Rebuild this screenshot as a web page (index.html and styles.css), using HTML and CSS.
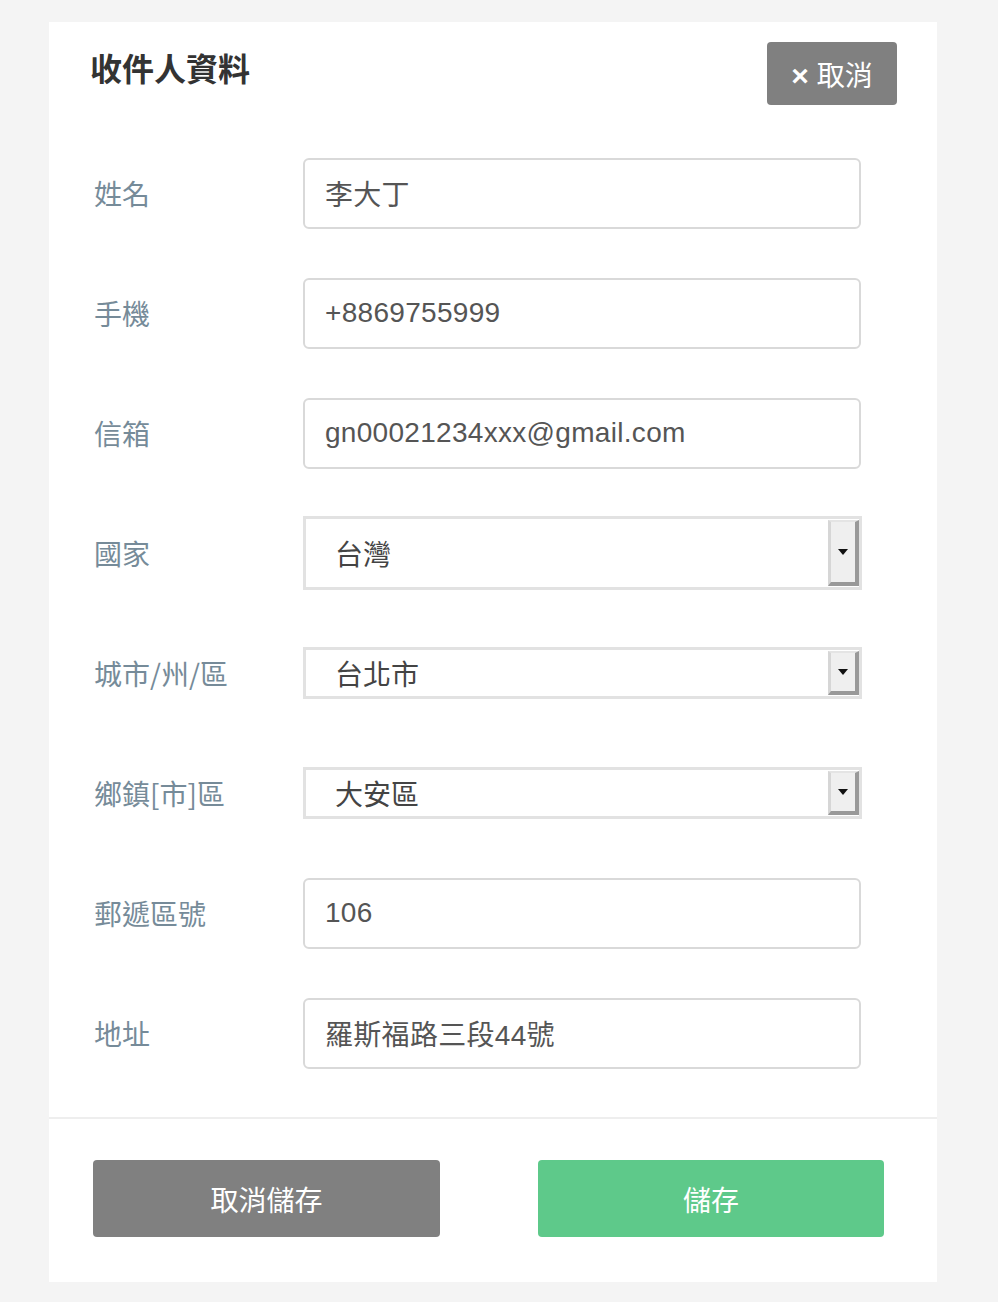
FILE: index.html
```html
<!DOCTYPE html>
<html lang="zh-Hant">

<head>
    <meta charset="UTF-8">
    <meta name="viewport" content="width=device-width, initial-scale=1.0">
    <title>收件人資料</title>

    <link rel="stylesheet" href="styles.css">
</head>

<body>
    <div class="card">
        <div class="card-head">
            <h2>收件人資料</h2>
            <button type="button" class="btn-close"><span class="x">×</span> 取消</button>
        </div>

        <form class="card-form">
            <div class="row">
                <label>姓名</label>
                <input type="text" value="李大丁">
            </div>
            <div class="row">
                <label>手機</label>
                <input type="text" value="+8869755999">
            </div>
            <div class="row">
                <label>信箱</label>
                <input type="text" value="gn00021234xxx@gmail.com">
            </div>
            <div class="row">
                <label>國家</label>
                <div class="select select-tall">
                    <span class="select-text">台灣</span>
                    <span class="select-arrow"></span>
                </div>
            </div>
            <div class="row">
                <label>城市/州/區</label>
                <div class="select">
                    <span class="select-text">台北市</span>
                    <span class="select-arrow"></span>
                </div>
            </div>
            <div class="row">
                <label>鄉鎮[市]區</label>
                <div class="select">
                    <span class="select-text">大安區</span>
                    <span class="select-arrow"></span>
                </div>
            </div>
            <div class="row">
                <label>郵遞區號</label>
                <input type="text" value="106">
            </div>
            <div class="row">
                <label>地址</label>
                <input type="text" value="羅斯福路三段44號">
            </div>
        </form>

        <div class="card-foot">
            <button type="button" class="btn btn-gray">取消儲存</button>
            <button type="button" class="btn btn-green">儲存</button>
        </div>
    </div>
</body>

</html>
```

FILE: styles.css
```css
/* 공통 */
* {
    box-sizing: border-box;
}

html,
body {
    margin: 0;
    padding: 0;
    background: #f4f4f4;
    font-family: "Liberation Sans", "Noto Sans CJK TC", sans-serif;
}

h2,
form,
label {
    margin: 0;
    padding: 0;
}

button {
    display: block;
    border: 0;
    padding: 0;
    font-family: inherit;
    cursor: pointer;
}

/* 세부 */
.card {
    width: 888px;
    margin: 22px 0 20px 49px;
    background: #fff;
}

.card-head {
    display: flex;
    justify-content: space-between;
    align-items: flex-start;
    padding: 20px 40px 0 41px;
}

.card-head h2 {
    margin-top: 8px;
    font-size: 32px;
    line-height: 40px;
    font-weight: bold;
    color: #333;
}

.btn-close {
    width: 130px;
    height: 63px;
    border-radius: 4px;
    background: #808080;
    color: #fff;
    font-size: 28px;
}

.btn-close .x {
    font-size: 30px;
    font-weight: bold;
}

.card-form {
    padding: 28px 0 24px;
    border-bottom: 2px solid #eee;
}

.row {
    display: flex;
    align-items: center;
    height: 120px;
    padding-left: 45px;
}

.row label {
    width: 209px;
    font-family: "Noto Sans CJK TC", sans-serif;
    font-size: 28px;
    color: #768b99;
}

.row input {
    width: 558px;
    height: 71px;
    padding: 0 20px;
    border: 2px solid #d9d9d9;
    border-radius: 6px;
    font-family: inherit;
    font-size: 28px;
    letter-spacing: 0.3px;
    color: #555;
    outline: none;
}

.select {
    display: flex;
    align-items: stretch;
    width: 559px;
    height: 52px;
    border: 3px solid #e2e2e2;
    background: #fff;
}

.select-tall {
    height: 74px;
}

.select-text {
    flex: 1;
    display: flex;
    align-items: center;
    padding-left: 29px;
    font-size: 28px;
    color: #444;
}

.select-arrow {
    position: relative;
    width: 31px;
    margin: 1px 0;
    background: #efefef;
    border-top: 2px solid #e4e4e4;
    border-left: 3px solid #d6d6d6;
    border-right: 4px solid #999;
    border-bottom: 4px solid #999;
}

.select-arrow::after {
    content: '';
    position: absolute;
    left: 50%;
    top: 50%;
    margin: -3px 0 0 -5px;
    border-left: 5px solid transparent;
    border-right: 5px solid transparent;
    border-top: 6px solid #111;
}

.card-foot {
    display: flex;
    justify-content: space-between;
    padding: 41px 53px 45px 44px;
}

.btn {
    width: 347px;
    height: 77px;
    border-radius: 4px;
    color: #fff;
    font-size: 28px;
}

.btn-gray {
    background: #808080;
}

.btn-green {
    width: 346px;
    background: #5ec98a;
}
```
